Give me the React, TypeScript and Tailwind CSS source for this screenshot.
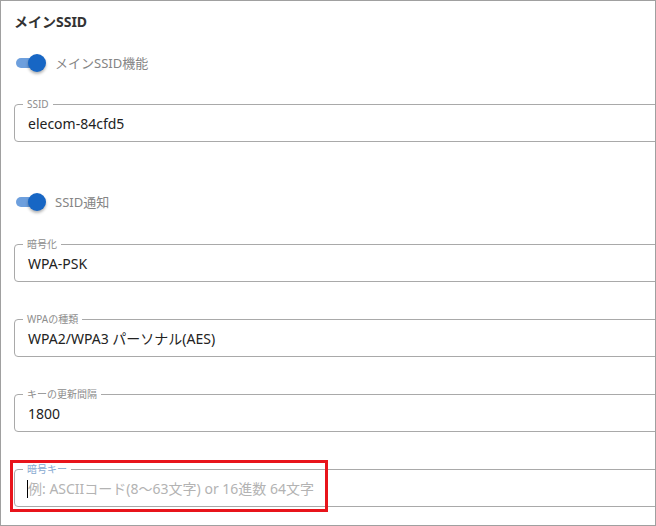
const font = { fontFamily: '"Noto Sans", "Noto Sans CJK JP", sans-serif' }

interface FieldProps {
  label: string
  value?: string
  placeholder?: string
  focused?: boolean
  className?: string
}

function Toggle({ label, className }: { label: string; className?: string }) {
  return (
    <div className={`flex items-center h-[24px] ml-[2px] ${className ?? ''}`}>
      <div className="relative w-[30px] h-[18px] shrink-0">
        <div className="absolute left-0 top-[4px] w-[28px] h-[10px] rounded-full bg-[#6d9fdd]" />
        <div className="absolute right-0 top-0 w-[18px] h-[18px] rounded-full bg-[#1766c4] shadow-[0_2px_3px_rgba(0,0,0,0.3)]" />
      </div>
      <span className="ml-[9px] text-[13px] text-[#858585] leading-[18px]">{label}</span>
    </div>
  )
}

function Field({ label, value, placeholder, focused, className }: FieldProps) {
  return (
    <fieldset className={`w-[660px] border border-[#a9a9a9] rounded-[4px] pl-[13px] pr-3 pt-[4px] pb-[7px] ${className ?? ''}`}>
      <legend
        className={`-ml-[5px] px-[4px] text-[10px] leading-[12px] ${focused ? 'text-[#86a9d0]' : 'text-[#8d8d8d]'}`}
      >
        {label}
      </legend>
      {value !== undefined ? (
        <div className="h-[20px] leading-[20px] text-[14px] text-[#222]">{value}</div>
      ) : (
        <div className="h-[20px] leading-[20px] text-[14px] text-[#b3b3b3] flex items-center">
          <span className="w-px h-[18px] bg-black -ml-px" />
          <span>{placeholder}</span>
        </div>
      )}
    </fieldset>
  )
}

export default function App() {
  return (
    <div style={font} className="w-[656px] h-[526px] bg-white border border-[#a0a0a0] overflow-hidden px-[13px]">
      <h2 className="pt-[12px] text-[14px] leading-[18px] font-bold text-[#333]">メインSSID</h2>
      <Toggle label="メインSSID機能" className="mt-[20px]" />
      <Field label="SSID" value="elecom-84cfd5" className="mt-[23px]" />
      <Toggle label="SSID通知" className="mt-[48px]" />
      <Field label="暗号化" value="WPA-PSK" className="mt-[24px]" />
      <Field label="WPAの種類" value="WPA2/WPA3 パーソナル(AES)" className="mt-[31px]" />
      <Field label="キーの更新間隔" value="1800" className="mt-[31px]" />
      <div className="relative mt-[31px]">
        <Field label="暗号キー" placeholder="例: ASCIIコード(8〜63文字) or 16進数 64文字" focused />
        <div className="absolute -left-[4px] -top-[3px] w-[318px] h-[52px] border-[3px] border-[#e8141b] pointer-events-none" />
      </div>
    </div>
  )
}
